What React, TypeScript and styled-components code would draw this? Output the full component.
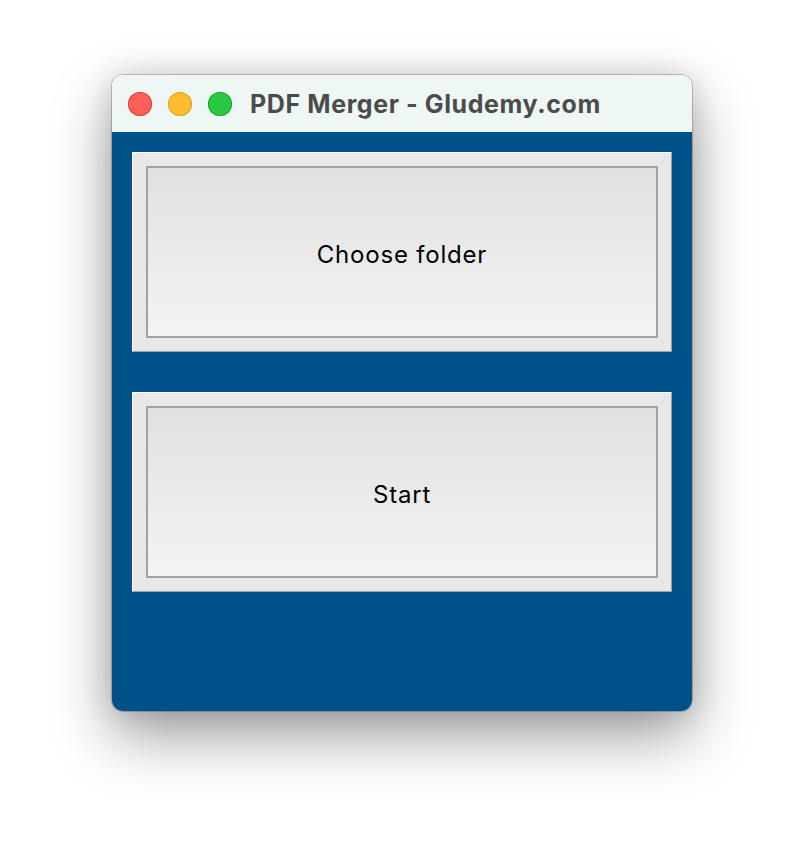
import React from "react";
import styled, { createGlobalStyle } from "styled-components";

const Global = createGlobalStyle`
  html, body { margin: 0; padding: 0; background: #ffffff; }
  body { font-family: Inter, "Liberation Sans", Arial, sans-serif; }
`;

const Stage = styled.div`
  width: 804px;
  height: 860px;
  padding: 75px 0 0 112px;
  box-sizing: border-box;
`;

const Window = styled.div`
  width: 580px;
  height: 636px;
  border-radius: 11px;
  overflow: hidden;
  display: flex;
  flex-direction: column;
  box-shadow: 0 0 0 1px rgba(0, 0, 0, 0.2), 0 25px 60px rgba(0, 0, 0, 0.38),
    0 0 30px rgba(0, 0, 0, 0.14);
`;

const TitleBar = styled.div`
  height: 57px;
  flex: none;
  background: #eff7f4;
  display: flex;
  align-items: center;
  padding-left: 16px;
  gap: 16px;
  box-sizing: border-box;
`;

const Lights = styled.div`
  display: flex;
  gap: 16px;
`;

const Light = styled.span<{ $fill: string; $edge: string }>`
  width: 24px;
  height: 24px;
  border-radius: 50%;
  background: ${(p) => p.$fill};
  box-shadow: inset 0 0 0 1px ${(p) => p.$edge};
  display: block;
`;

const Title = styled.div`
  font-family: Inter, "Liberation Sans", Arial, sans-serif;
  font-weight: 700;
  font-size: 25px;
  letter-spacing: 0.6px;
  color: #4b4b4b;
  margin-left: 2px;
`;

const Body = styled.div`
  flex: 1;
  background: #005189;
  padding: 20px 20px 0 20px;
  display: flex;
  flex-direction: column;
  gap: 40px;
`;

const Button = styled.div`
  height: 200px;
  box-sizing: border-box;
  background: #e8e8e8;
  border-top: 1px solid #ffffff;
  border-left: 1px solid #ffffff;
  border-right: 1px solid #9e9e9e;
  border-bottom: 1px solid #9e9e9e;
  padding: 13px;
  display: flex;
`;

const ButtonFace = styled.div`
  flex: 1;
  border: 2px solid #a2a2a2;
  background: linear-gradient(#e1e1e1, #f3f3f3);
  display: flex;
  align-items: center;
  justify-content: center;
  padding-top: 5px;
  font-family: Inter, "Liberation Sans", Arial, sans-serif;
  font-size: 24px;
  letter-spacing: 0.8px;
  color: #000000;
`;

export default function App() {
  return (
    <>
      <Global />
      <Stage>
        <Window>
          <TitleBar>
            <Lights>
              <Light $fill="#fe5f57" $edge="#e0443e" />
              <Light $fill="#febc2e" $edge="#dea123" />
              <Light $fill="#28c840" $edge="#1aab29" />
            </Lights>
            <Title>PDF Merger - Gludemy.com</Title>
          </TitleBar>
          <Body>
            <Button>
              <ButtonFace>Choose folder</ButtonFace>
            </Button>
            <Button>
              <ButtonFace>Start</ButtonFace>
            </Button>
          </Body>
        </Window>
      </Stage>
    </>
  );
}
